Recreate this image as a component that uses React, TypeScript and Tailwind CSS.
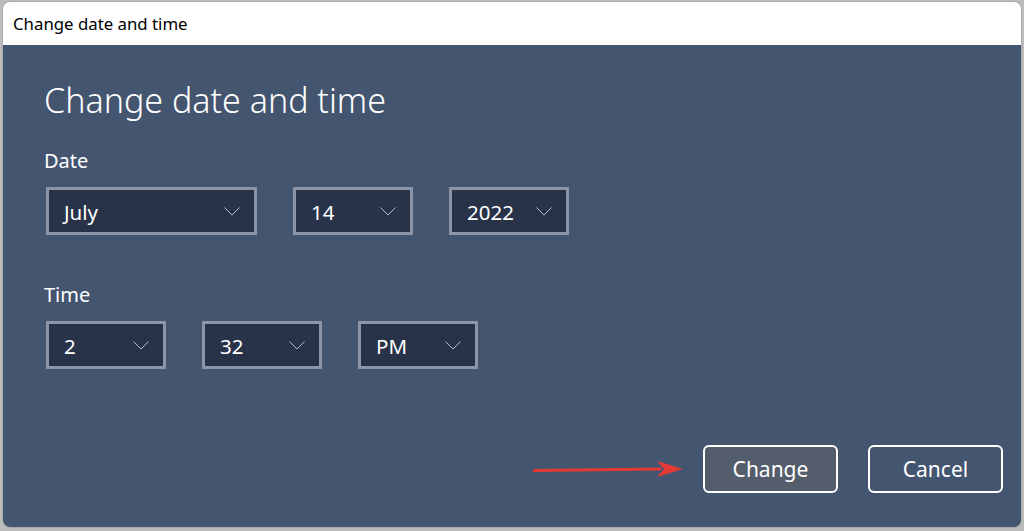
type SelectProps = {
  value: string;
  width: string;
};

function Chevron() {
  return (
    <svg width="16" height="9" viewBox="0 0 16 9" fill="none" className="text-[#b4bbc8]">
      <polyline points="0.5,0.5 8,8 15.5,0.5" stroke="currentColor" strokeWidth="1" />
    </svg>
  );
}

function FakeSelect({ value, width }: SelectProps) {
  return (
    <div
      className={`${width} flex h-[48px] items-center justify-between border-[3px] border-[#8b95a7] bg-[#283349] pl-[15px] pr-[14px] text-[20.5px] text-white`}
    >
      <span className="pt-[2px]">{value}</span>
      <Chevron />
    </div>
  );
}

export default function App() {
  return (
    <div className="h-[531px] w-[1024px] overflow-hidden bg-[#bcbcbc] px-[2px] pt-[1px] font-['Noto_Sans',sans-serif]">
      <div className="flex h-[527px] flex-col overflow-hidden rounded-[8px] border border-[#a9a9a9]">
        <div className="flex h-[43px] items-center bg-white pl-[10px] text-[16.8px] text-black">
          Change date and time
        </div>

        <div className="flex flex-1 flex-col bg-[#44556f] pl-[41px] pr-[18px] text-white">
          <h1 className="mt-[33px] text-[34px] font-light leading-[44px]">Change date and time</h1>

          <p className="mt-[26px] text-[20px] leading-[26px]">Date</p>
          <div className="mt-[13px] flex gap-[36px] pl-[2px]">
            <FakeSelect value="July" width="w-[211px]" />
            <FakeSelect value="14" width="w-[120px]" />
            <FakeSelect value="2022" width="w-[120px]" />
          </div>

          <p className="mt-[47px] text-[20px] leading-[26px]">Time</p>
          <div className="mt-[13px] flex gap-[36px] pl-[2px]">
            <FakeSelect value="2" width="w-[120px]" />
            <FakeSelect value="32" width="w-[120px]" />
            <FakeSelect value="PM" width="w-[120px]" />
          </div>

          <div className="mt-[76px] flex items-center justify-end">
            <svg width="150" height="18" viewBox="0 0 150 18" className="mr-[20px]">
              <line x1="0" y1="10.5" x2="128" y2="9" stroke="#e53935" strokeWidth="3" />
              <polygon points="124,1 150,9 124,17 131,9" fill="#e53935" />
            </svg>
            <button className="h-[48px] w-[135px] rounded-[6px] border-2 border-white bg-[#545d6c] pt-[2px] text-[21px] text-white">
              Change
            </button>
            <button className="ml-[30px] h-[48px] w-[135px] rounded-[6px] border-2 border-white bg-transparent pt-[2px] text-[21px] text-white">
              Cancel
            </button>
          </div>
        </div>
      </div>
    </div>
  );
}
